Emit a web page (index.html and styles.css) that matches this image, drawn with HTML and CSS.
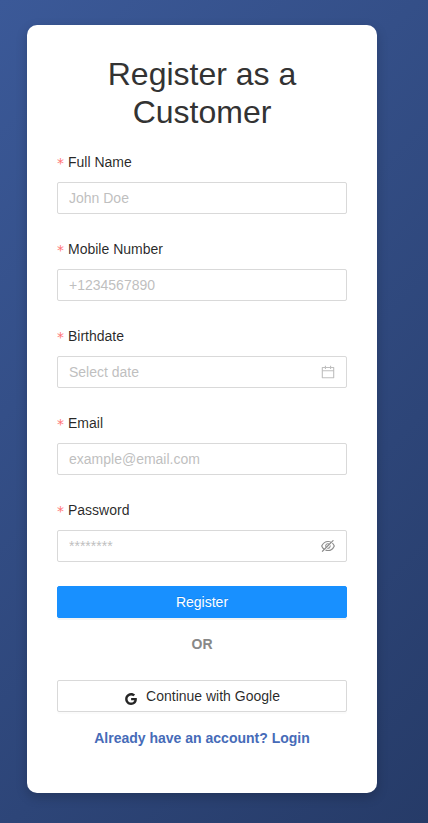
FILE: index.html
```html
<!DOCTYPE html>
<html lang="en">
<head>
<meta charset="utf-8">
<meta name="viewport" content="width=device-width, initial-scale=1">
<title>Register as a Customer</title>
<link rel="stylesheet" href="styles.css">
</head>
<body>
<main class="card">
  <h1 class="title">Register as a Customer</h1>
  <form>
    <div class="field">
      <label class="label" for="name">Full Name</label>
      <div class="control"><input id="name" type="text" placeholder="John Doe"></div>
    </div>
    <div class="field">
      <label class="label" for="mobile">Mobile Number</label>
      <div class="control"><input id="mobile" type="text" placeholder="+1234567890"></div>
    </div>
    <div class="field">
      <label class="label" for="birthdate">Birthdate</label>
      <div class="control">
        <input id="birthdate" type="text" placeholder="Select date">
        <svg class="icon icon-calendar" viewBox="64 64 896 896"><path d="M880 184H712v-64c0-4.4-3.6-8-8-8h-56c-4.4 0-8 3.6-8 8v64H384v-64c0-4.4-3.6-8-8-8h-56c-4.4 0-8 3.6-8 8v64H144c-17.7 0-32 14.3-32 32v664c0 17.7 14.3 32 32 32h736c17.7 0 32-14.3 32-32V216c0-17.7-14.3-32-32-32zm-40 656H184V460h656v380zM184 392V256h128v48c0 4.4 3.6 8 8 8h56c4.4 0 8-3.6 8-8v-48h256v48c0 4.4 3.6 8 8 8h56c4.4 0 8-3.6 8-8v-48h128v136H184z"/></svg>
      </div>
    </div>
    <div class="field">
      <label class="label" for="email">Email</label>
      <div class="control"><input id="email" type="text" placeholder="example@email.com"></div>
    </div>
    <div class="field">
      <label class="label" for="password">Password</label>
      <div class="control">
        <input id="password" type="password" placeholder="********">
        <svg class="icon icon-eye" viewBox="64 64 896 896"><path d="M942.2 486.2Q889.47 375.11 816.7 305l-50.88 50.88C807.31 395.53 843.45 447.4 874.7 512 791.5 684.2 673.4 766 512 766q-72.67 0-133.87-22.38L323 798.75Q408 838 512 838q288.3 0 430.2-300.3a60.29 60.29 0 000-51.5zm-63.57-320.64L836 122.88a8 8 0 00-11.32 0L715.31 232.2Q624.86 186 512 186q-288.3 0-430.2 300.3a60.3 60.3 0 000 51.5q56.69 119.4 136.5 191.41L112.48 835a8 8 0 000 11.31L155.17 889a8 8 0 0011.31 0l712.15-712.12a8 8 0 000-11.32zM149.3 512C232.6 339.8 350.7 258 512 258c54.54 0 104.13 9.36 149.12 28.39l-70.3 70.3a176 176 0 00-238.13 238.13l-83.42 83.42C223.1 637.49 183.3 582.28 149.3 512zm246.7 0a112.11 112.11 0 01146.2-106.69L401.31 546.2A112 112 0 01396 512z"/><path d="M508 624c-3.46 0-6.87-.16-10.25-.47l-52.82 52.82a176.09 176.09 0 00227.42-227.42l-52.82 52.82c.31 3.38.47 6.79.47 10.25a111.94 111.94 0 01-112 112z"/></svg>
      </div>
    </div>
    <button class="btn btn-primary" type="button">Register</button>
  </form>
  <div class="divider">OR</div>
  <button class="btn btn-google" type="button">
    <svg class="icon icon-google" viewBox="64 64 896 896"><path d="M881 442.4H519.7v148.5h206.4c-8.9 48-35.9 88.6-76.6 115.8-34.4 23-78.3 36.6-129.9 36.6-99.9 0-184.4-67.5-214.6-158.2-7.6-23-12-47.6-12-72.9s4.4-49.9 12-72.9c30.3-90.6 114.8-158.1 214.7-158.1 56.3 0 106.8 19.4 146.6 57.4l110-110.1c-66.5-62-153.2-100-256.6-100-149.9 0-279.6 86-342.7 211.4-26 51.8-40.8 110.4-40.8 172.4S151 632.8 177 684.6C240.1 810 369.8 896 519.7 896c103.6 0 190.4-34.4 253.8-93 72.5-66.8 114.4-165.2 114.4-282.1 0-27.2-2.4-53.3-6.9-78.5z"/></svg>
    <span>Continue with Google</span>
  </button>
  <a class="login">Already have an account? Login</a>
</main>
</body>
</html>
```

FILE: styles.css
```css
* {
  box-sizing: border-box;
}

body {
  margin: 0;
  min-height: 100vh;
  padding: 25px 27px 30px;
  background: linear-gradient(135deg, #3b5998, #263b68);
  font-family: "Liberation Sans", Arial, sans-serif;
  font-size: 14px;
  line-height: 22px;
  color: rgba(0, 0, 0, 0.85);
}

.card {
  width: 350px;
  height: 768px;
  padding: 30px;
  background: #fff;
  border-radius: 10px;
  box-shadow: 0 4px 12px rgba(0, 0, 0, 0.2);
}

.title {
  margin: 0 0 20px;
  font-size: 32px;
  line-height: 38px;
  font-weight: 400;
  text-align: center;
  color: #333;
}

.field {
  margin-bottom: 24px;
}

.label {
  display: flex;
  align-items: center;
  height: 22px;
  margin-bottom: 9px;
}

.label::before {
  content: "*";
  margin-right: 4px;
  padding-top: 1px;
  color: #ff7376;
  font-family: "DejaVu Sans", sans-serif;
  line-height: 14px;
}

.control {
  display: flex;
  align-items: center;
  height: 32px;
  padding: 0 11px;
  border: 1px solid #d9d9d9;
  border-radius: 2px;
}

.control input {
  flex: 1;
  min-width: 0;
  height: 22px;
  padding: 0;
  border: 0;
  outline: 0;
  background: none;
  font: inherit;
}

.control input::placeholder {
  color: #bfbfbf;
}

.icon {
  flex: none;
  width: 14px;
  height: 14px;
  fill: currentColor;
}

.icon-calendar {
  color: rgba(0, 0, 0, 0.25);
}

.icon-eye {
  color: rgba(0, 0, 0, 0.45);
}

.btn {
  display: flex;
  align-items: center;
  justify-content: center;
  width: 100%;
  height: 32px;
  padding: 0;
  border: 1px solid #d9d9d9;
  border-radius: 2px;
  background: #fff;
  font: inherit;
  color: inherit;
  box-shadow: 0 2px 0 rgba(0, 0, 0, 0.015);
}

.btn-primary {
  border-color: #1890ff;
  background: #1890ff;
  color: #fff;
  box-shadow: 0 2px 0 rgba(0, 0, 0, 0.045);
  text-shadow: 0 -1px 0 rgba(0, 0, 0, 0.12);
}

.divider {
  margin: 15px 0 25px;
  text-align: center;
  font-weight: 700;
  color: #888;
}

.btn-google {
  gap: 8px;
}

.icon-google {
  margin-top: 5px;
}

.login {
  display: block;
  margin-top: 15px;
  text-align: center;
  font-weight: 700;
  color: #466bb8;
}
```
